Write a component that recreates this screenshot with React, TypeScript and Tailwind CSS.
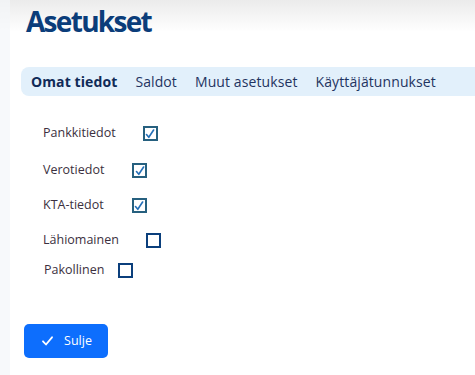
import React from 'react';

type Option = { label: string; checked: boolean; gap: string; top: string; indent?: string };

const options: Option[] = [
  { label: 'Pankkitiedot', checked: true, gap: 'ml-[27px]', top: 'mt-[126px]' },
  { label: 'Verotiedot', checked: true, gap: 'ml-[28px]', top: 'mt-[22px]' },
  { label: 'KTA-tiedot', checked: true, gap: 'ml-[28px]', top: 'mt-[20px]' },
  { label: 'Lähiomainen', checked: false, gap: 'ml-[27px]', top: 'mt-[20px]' },
  { label: 'Pakollinen', checked: false, gap: 'ml-[14px]', top: 'mt-[15px]', indent: 'pl-[1px]' },
];

function Box({ checked }: { checked: boolean }) {
  if (!checked) {
    return <span className="block w-[15px] h-[15px] border-2 border-[#0b3f7c] bg-white" />;
  }
  return (
    <span className="flex items-center justify-center w-[15px] h-[15px] border-2 border-[#26607f] bg-white">
      <svg width="10" height="10" viewBox="0 0 10 10" fill="none">
        <path d="M1.5 5.5 L3.8 8.3 L8.6 1" stroke="#2470b8" strokeWidth="1.6" strokeLinecap="round" strokeLinejoin="round" />
      </svg>
    </span>
  );
}

export default function App() {
  const tabs = ['Omat tiedot', 'Saldot', 'Muut asetukset', 'Käyttäjätunnukset'];
  return (
    <div
      className="w-[475px] h-[375px] overflow-hidden flex bg-[linear-gradient(to_bottom,#ebebeb,#ffffff_32px)]"
      style={{ fontFamily: '"Open Sans", "Noto Sans", sans-serif' }}
    >
      {/* left rail */}
      <div className="w-[10px] shrink-0 bg-[#f4f6f9]/70" />

      <main className="flex-1 min-w-0 pl-[11px] relative">
        <h1 className="absolute left-[16px] top-[4px] text-[28px] leading-[34px] font-bold tracking-[-1.7px] text-[#0b3d7a]">
          Asetukset
        </h1>

        {/* tabs */}
        <div className="absolute left-[11px] right-0 top-[67px] h-[29px] rounded-l-[8px] bg-[#e2f0fb] flex items-center pl-[10px] gap-[18px] text-[14px] tracking-[0.1px] text-[#1f3461]">
          {tabs.map((t, i) => (
            <span key={t} className={i === 0 ? 'font-bold text-[#0f2a57]' : ''}>
              {t}
            </span>
          ))}
        </div>

        {/* options */}
        <div className="flex flex-col pl-[22px]">
          {options.map((o) => (
            <div key={o.label} className={`flex items-center h-[15px] ${o.top} ${o.indent ?? ''}`}>
              <span className="text-[12.5px] text-[#3b3040]">{o.label}</span>
              <span className={o.gap}>
                <Box checked={o.checked} />
              </span>
            </div>
          ))}
        </div>

        <button className="mt-[46px] ml-[3px] w-[84px] h-[34px] rounded-[5px] bg-[#0d6efd] text-white flex items-center justify-center gap-[11px] text-[12.5px] pl-[2px]">
          <svg width="11" height="10" viewBox="0 0 11 10" fill="none">
            <path d="M1 5.3 L4 8.5 L10 1.3" stroke="white" strokeWidth="1.8" strokeLinecap="round" strokeLinejoin="round" />
          </svg>
          Sulje
        </button>
      </main>
    </div>
  );
}
